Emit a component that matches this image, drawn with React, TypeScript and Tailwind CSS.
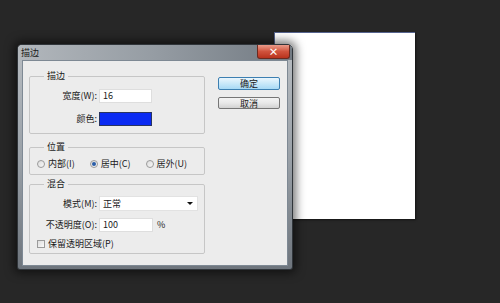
import React from "react";

function Radio({ checked }: { checked?: boolean }) {
  return (
    <span className="w-[8px] h-[8px] rounded-full border border-[#9a9a9a] bg-gradient-to-br from-[#dcdcdc] to-[#f8f8f8] flex items-center justify-center">
      {checked ? <span className="w-[4px] h-[4px] rounded-full bg-[#2a5ea8]" /> : null}
    </span>
  );
}

export default function App() {
  return (
    <div className="relative w-[500px] h-[303px] bg-[#272727] overflow-hidden font-['Noto_Sans_CJK_SC',sans-serif] text-[#1a1a1a]">
      {/* canvas */}
      <div className="absolute left-[274px] top-[32px] w-[141px] h-[187px] bg-white border-t border-l border-[#56648f] shadow-[1px_1px_2px_rgba(0,0,0,0.5)]" />

      {/* dialog */}
      <div className="absolute left-[17px] top-[44px] w-[276px] h-[226px] flex flex-col border border-[#30353a] rounded-t-[5px] rounded-b-[3px] bg-gradient-to-b from-[#b8bdc2] via-[#9aa1a8] to-[#6e757d] shadow-[0_0_10px_3px_rgba(0,0,0,0.55)]">
        {/* title bar */}
        <div className="h-[15px] flex items-start justify-between pl-[3px] pr-[2px] bg-gradient-to-r from-[#b2b7bc] via-[#959ca3] to-[#737b83] rounded-t-[4px]">
          <span className="text-[9px] leading-[15px] text-[#1a1a1a]">描边</span>
          <div className="w-[33px] h-[14px] rounded-b-[3px] border border-t-0 border-[#6b2a20] bg-gradient-to-b from-[#e89a8a] via-[#d0523c] to-[#b8321c] flex items-center justify-center">
            <span className="text-white text-[10px] font-bold leading-none">×</span>
          </div>
        </div>

        {/* client area */}
        <div className="mx-[4px] h-[206px] bg-[#ececec] border border-[#7e8994] flex pl-[6px] pr-[7px]">
          {/* left column */}
          <div className="w-[176px] pt-[10px] flex flex-col">
            <fieldset className="border border-[#c6c6c6] rounded-[2px] pb-[7px]">
              <legend className="ml-[14px] px-[3px] text-[9px] leading-[10px]">描边</legend>
              <div className="mt-[8px] flex items-center gap-[2px]">
                <span className="w-[67px] text-right text-[9px] leading-[14px]">宽度(W):</span>
                <div className="w-[53px] h-[14px] bg-white border border-[#dedede] pl-[3px] text-[9px] leading-[12px]">16</div>
              </div>
              <div className="mt-[9px] flex items-center gap-[2px]">
                <span className="w-[67px] text-right text-[9px] leading-[14px]">颜色:</span>
                <div className="w-[53px] h-[14px] bg-[#0a2af2] border border-[#2a3560]" />
              </div>
            </fieldset>

            <fieldset className="mt-[8px] border border-[#c6c6c6] rounded-[2px] pb-[5px]">
              <legend className="ml-[14px] px-[3px] text-[9px] leading-[10px]">位置</legend>
              <div className="mt-[7px] h-[10px] flex items-center pl-[7px] gap-[15px] text-[9px] leading-[10px]">
                <div className="flex items-center gap-[3px]">
                  <Radio />
                  <span>内部(I)</span>
                </div>
                <div className="flex items-center gap-[3px]">
                  <Radio checked />
                  <span>居中(C)</span>
                </div>
                <div className="flex items-center gap-[3px]">
                  <Radio />
                  <span>居外(U)</span>
                </div>
              </div>
            </fieldset>

            <fieldset className="mt-[4px] border border-[#c6c6c6] rounded-[2px] pb-[4px]">
              <legend className="ml-[14px] px-[3px] text-[9px] leading-[10px]">混合</legend>
              <div className="mt-[7px] flex items-center gap-[2px]">
                <span className="w-[67px] text-right text-[9px] leading-[15px]">模式(M):</span>
                <div className="w-[99px] h-[15px] bg-white border border-[#e2e2e2] pl-[3px] pr-[4px] flex items-center justify-between">
                  <span className="text-[9px] leading-[13px]">正常</span>
                  <span className="w-0 h-0 border-l-[3px] border-r-[3px] border-t-[3px] border-l-transparent border-r-transparent border-t-[#111]" />
                </div>
              </div>
              <div className="mt-[7px] flex items-center gap-[2px]">
                <span className="w-[67px] text-right text-[9px] leading-[14px]">不透明度(O):</span>
                <div className="w-[54px] h-[14px] bg-white border border-[#dedede] pl-[3px] text-[9px] leading-[12px]">100</div>
                <span className="ml-[2px] text-[9px] leading-[14px]">%</span>
              </div>
              <div className="mt-[7px] h-[10px] flex items-center pl-[7px] gap-[3px]">
                <span className="w-[8px] h-[8px] border border-[#9a9a9a] bg-gradient-to-br from-[#dcdcdc] to-[#fafafa]" />
                <span className="text-[9px] leading-[10px]">保留透明区域(P)</span>
              </div>
            </fieldset>
          </div>

          {/* right column */}
          <div className="ml-[13px] w-[62px] pt-[16px] flex flex-col gap-[7px]">
            <div className="h-[13px] rounded-[2px] border border-[#3c7fb1] bg-gradient-to-b from-[#eaf6fd] via-[#c9e8f9] to-[#a7d9f5] flex items-center justify-center text-[9px] leading-none">
              确定
            </div>
            <div className="h-[12px] rounded-[2px] border border-[#767676] bg-gradient-to-b from-[#f4f4f4] via-[#e8e8e8] to-[#d2d2d2] flex items-center justify-center text-[9px] leading-none">
              取消
            </div>
          </div>
        </div>
      </div>
    </div>
  );
}
